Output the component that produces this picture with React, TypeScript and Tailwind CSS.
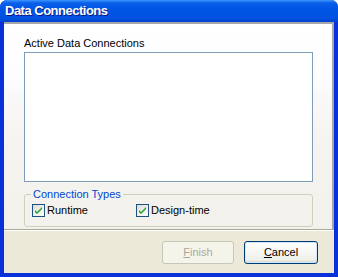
import React from "react";

function Check({ label, className = "" }: { label: string; className?: string }) {
  return (
    <div className={"flex items-center " + className}>
      <div className="w-[13px] h-[13px] border border-[#1c5180] bg-[linear-gradient(135deg,#dcdcd7,#ffffff)] flex items-center justify-center">
        <svg width="11" height="11" viewBox="0 0 11 11">
          <path d="M2 5 L4 7 L9 2 L9 4 L4 9 L2 7 Z" fill="#21a121" />
        </svg>
      </div>
      <span className="ml-[2px] text-[11px] leading-[13px] text-black">{label}</span>
    </div>
  );
}

export default function App() {
  return (
    <div
      className="w-[338px] h-[277px] flex flex-col bg-[#0831d9] rounded-t-[7px] overflow-hidden"
      style={{ fontFamily: '"Liberation Sans", Arial, sans-serif' }}
    >
      <div className="h-[22px] shrink-0 bg-[linear-gradient(180deg,#3d95ff_0px,#0a5ee9_3px,#0055e5_10px,#0051e0_18px,#0043cf_22px)] flex items-center pl-[5px]">
        <span
          className="text-white font-bold text-[13px] leading-[16px] tracking-[-0.5px]"
          style={{ textShadow: "1px 1px #0a1883" }}
        >
          Data Connections
        </span>
      </div>
      <div className="flex-1 mx-[4px] mb-[4px] flex flex-col bg-[#ece9d8]">
        <div className="h-[207px] border-t-2 border-r-2 border-[#a7a6aa] bg-[linear-gradient(180deg,#ffffff_0%,#fdfcff_25%,#f5f4f0_55%,#f3f1eb_100%)] pl-[20px] pr-[19px] pt-[13px]">
          <div className="text-[11px] leading-[13px] text-black">Active Data Connections</div>
          <div className="mt-[2px] h-[130px] border border-[#7f9db9] bg-white" />
          <div className="relative mt-[12px] h-[33px] border border-[#d0d0bf] rounded-[3px]">
            <span className="absolute left-[6px] top-[-7px] px-[2px] text-[11px] leading-[13px] text-[#0046d5] bg-[#f4f3ee]">
              Connection Types
            </span>
            <div className="flex pt-[9px] pl-[7px]">
              <Check label="Runtime" className="w-[104px]" />
              <Check label="Design-time" />
            </div>
          </div>
        </div>
        <div className="h-px bg-[#aca899]" />
        <div className="h-px bg-white" />
        <div className="flex-1 flex justify-end items-start pt-[10px] pr-[16px] gap-[10px]">
          <div className="w-[72px] h-[23px] border border-[#c9c7ba] rounded-[3px] bg-[#f5f4ea] flex items-center justify-center text-[11px] text-[#aca899]">
            <span><u>F</u>inish</span>
          </div>
          <div className="w-[74px] h-[23px] border border-[#003c74] rounded-[3px] bg-[linear-gradient(180deg,#ffffff,#f0f0ea_85%,#d6d0c5)] shadow-[inset_0_0_0_1px_#cee7ff] flex items-center justify-center text-[11px] text-black">
            <span><u>C</u>ancel</span>
          </div>
        </div>
      </div>
    </div>
  );
}
